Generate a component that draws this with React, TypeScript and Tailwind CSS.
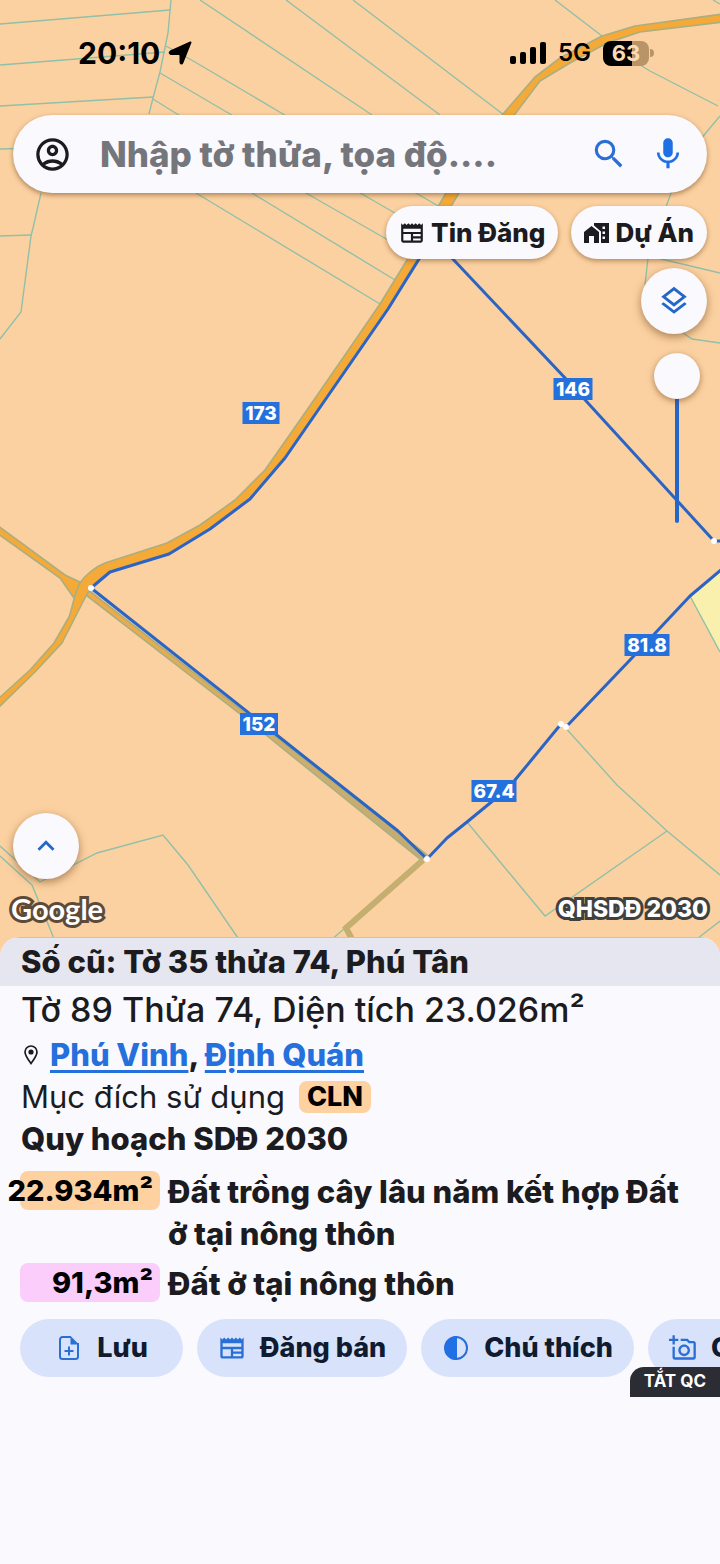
import type { ReactNode } from "react";
import {
  MdKeyboardArrowUp,
  MdMic,
  MdNewspaper,
  MdOutlineAccountCircle,
  MdOutlineAddAPhoto,
  MdOutlineLayers,
  MdSearch,
} from "react-icons/md";

interface EdgeLabel {
  x: number;
  y: number;
  width: number;
  text: string;
}

interface Zone {
  area: string;
  name: string;
  color: string;
}

const parcelLines = [
  "0,24 170,10",
  "171,0 168,33 160,72 153,98 149,114",
  "41,193 33,228 31,236 21,312 0,339",
  "0,65 165,52",
  "0,106 153,97",
  "0,149 40,148",
  "0,236 31,235",
  "200,0 372,115",
  "286,0 440,115",
  "353,0 504,115",
  "166,46 195,62 283,114 416,193 445,210",
  "160,73 230,114 362,194 400,216",
  "153,99 177,114 306,193 395,244",
  "252,193 395,280",
  "196,193 380,304",
  "555,0 602,36",
  "635,62 650,71 718,106",
  "713,0 720,4",
  "720,116 700,140 671,193 648,258 645,285",
  "657,258 720,273",
  "683,333 692,339 720,343",
  "690,596 720,652",
  "563,725 617,785 667,831 720,875",
  "667,831 545,916 467,822",
  "720,921 698,938",
  "0,846 40,882 97,853 163,835 188,865 240,941",
  "0,856 32,885 55,941",
  "330,941 345,928",
];

const edgeLabels: EdgeLabel[] = [
  { x: 261, y: 413, width: 37, text: "173" },
  { x: 573, y: 389, width: 39, text: "146" },
  { x: 647, y: 645, width: 45, text: "81.8" },
  { x: 259, y: 724, width: 38, text: "152" },
  { x: 494, y: 791, width: 45, text: "67.4" },
];

const vertices = [
  [91, 588],
  [427, 859],
  [561, 724],
  [566, 727],
  [714, 541],
];

const zones: Zone[] = [
  {
    area: "22.934m²",
    name: "Đất trồng cây lâu năm kết hợp Đất ở tại nông thôn",
    color: "bg-[#fdd1a0]",
  },
  { area: "91,3m²", name: "Đất ở tại nông thôn", color: "bg-[#fbcdfb]" },
];

const ParcelMap = () => (
  <svg
    className="absolute inset-0 h-full w-full"
    viewBox="0 0 720 960"
    preserveAspectRatio="xMidYMin slice"
    role="img"
    aria-label="Bản đồ thửa đất"
  >
    <defs>
      <linearGradient id="lane" x1="0" y1="0" x2="1" y2="1">
        <stop offset="0" stopColor="#f5aa3c" />
        <stop offset="0.6" stopColor="#cfae6a" />
        <stop offset="1" stopColor="#c0ab74" />
      </linearGradient>
    </defs>
    <rect width="720" height="960" fill="#fcd1a1" />
    <polygon points="690,596 720,571 720,652" fill="#f9f0ae" />
    <g fill="none" stroke="#90c0a8" strokeWidth="1.4">
      {parcelLines.map((points) => (
        <polyline key={points} points={points} />
      ))}
    </g>

    {/* roads */}
    <g stroke="#a9ae83" strokeWidth="1.6" strokeLinejoin="round">
      <path
        d="M87 589L427 855L421 860L240 714L86 595Z"
        fill="url(#lane)"
      />
      <path d="M-3 525L65 575L82 583L74 598L60 578L-3 533Z" fill="#f5a937" />
      <path
        d="M446 193L407 260L380 304L345 355L300 420L265 470L245 490L235 500L200 525L167 543L105 563C95 567 85 575 80 583C74 594 73 606 69 617L54 643L30 670L-3 700L-3 709L35 672L62 643L87 594L91 588L110 572L169 554L210 529L250 499L285 458L388 309L419 260L459 193L515 114L540 81L570 63L607 43L640 32L723 22L723 14L635 26L602 36L560 58L535 77L503 114Z"
        fill="#f5a937"
      />
    </g>
    <path d="M423 860L346 928L353 941" fill="none" stroke="#c5af70" strokeWidth="6" />

    {/* selected parcel */}
    <g fill="none" stroke="#2a64c4" strokeWidth="3" strokeLinejoin="round">
      <path d="M427 859L398 831L91 588L110 572L169 554L210 529L250 499L285 458L388 309L432 238L451 257L566 379L714 541L722 541" />
      <path d="M722 569L690 596L630 660L566 727" />
      <path d="M561 724L515 780L495 799L467 822L447 838L427 859" />
    </g>
    {vertices.map(([x, y]) => (
      <circle key={x} cx={x} cy={y} r="3" fill="#fff" />
    ))}
    {edgeLabels.map(({ x, y, width, text }) => (
      <g key={text}>
        <rect x={x - width / 2} y={y - 11} width={width} height="22" fill="#2470dc" />
        <text
          x={x}
          y={y + 7}
          textAnchor="middle"
          className="fill-white font-['Inter',sans-serif] text-[19px] font-extrabold"
        >
          {text}
        </text>
      </g>
    ))}
  </svg>
);

const StatusBar = () => (
  <div className="flex h-[106px] items-center justify-between pr-[66px] pl-[78px] text-black">
    <div className="flex items-center gap-2">
      <time className="text-[30px] font-bold">20:10</time>
      <svg className="size-6" viewBox="0 0 24 24" aria-hidden="true">
        <path
          d="M22.500 1.500L14.500 21.500Q13.500 23.500 12.500 21.500V14.500Q12.500 13 11 13H3Q0.500 12 2.500 10.500Z"
          fill="currentColor"
          stroke="currentColor"
          strokeWidth="2"
          strokeLinejoin="round"
        />
      </svg>
    </div>
    <div className="flex items-center gap-3">
      <svg className="h-6 w-9" viewBox="0 0 36 24" fill="currentColor" aria-hidden="true">
        <rect x="0" y="15" width="6" height="8" rx="2" />
        <rect x="10" y="11" width="6" height="12" rx="2" />
        <rect x="20" y="6" width="6" height="17" rx="2" />
        <rect x="30" y="1" width="6" height="22" rx="2" />
      </svg>
      <span className="text-2xl font-semibold">5G</span>
      <div className="flex items-center gap-px">
        <div className="flex h-[25px] w-[46px] items-center justify-center rounded-lg bg-linear-to-r from-black from-64% to-[#b89468] to-64% text-[22px] font-bold text-[#fbdcb8]">
          63
        </div>
        <div className="h-2 w-1 rounded-r-full bg-[#b89468]" />
      </div>
    </div>
  </div>
);

const SearchBar = () => (
  <form
    className="mx-[13px] mt-[9px] flex h-[78px] items-center rounded-full bg-[#faf9fe] px-5 shadow-[0_2px_5px_rgba(90,50,10,0.5)]"
    onSubmit={(event) => event.preventDefault()}
  >
    <button type="button" aria-label="Tài khoản" className="text-[#1b1b20]">
      <MdOutlineAccountCircle className="size-[39px]" />
    </button>
    <input
      type="search"
      aria-label="Tìm kiếm"
      placeholder="Nhập tờ thửa, tọa độ...."
      className="ml-7 min-w-0 flex-1 bg-transparent text-[35px] font-extrabold outline-none placeholder:text-[#75767c]"
    />
    <button type="submit" aria-label="Tìm" className="text-[#2a6fd6]">
      <MdSearch className="size-[38px]" />
    </button>
    <button type="button" aria-label="Tìm bằng giọng nói" className="ml-[21px] text-[#1f6fe5]">
      <MdMic className="size-[38px]" />
    </button>
  </form>
);

const MapChip = ({ icon, children }: { icon: ReactNode; children: ReactNode }) => (
  <button className="flex h-[53px] items-center gap-[6px] rounded-full bg-[#faf9fe] px-[13px] text-[26px] font-extrabold text-[#1b1b20] shadow-[0_2px_5px_rgba(90,50,10,0.45)]">
    {icon}
    {children}
  </button>
);

const RoundButton = ({ label, children }: { label: string; children: ReactNode }) => (
  <button
    aria-label={label}
    className="flex size-[66px] items-center justify-center rounded-full bg-[#faf9fe] text-[#2467c8] shadow-[0_3px_8px_rgba(90,50,10,0.5)]"
  >
    {children}
  </button>
);

const ActionButton = ({ icon, children }: { icon: ReactNode; children: ReactNode }) => (
  <button className="flex h-[58px] min-w-[163px] shrink-0 items-center justify-center gap-[14px] rounded-full bg-[#d8e3fb] px-[21px] text-[27px] font-extrabold text-[#101b30]">
    <span className="text-[#2a6fd6]">{icon}</span>
    {children}
  </button>
);

const HomeWorkIcon = () => (
  <svg className="h-5 w-[25px]" viewBox="0 0 25 20" fill="currentColor" aria-hidden="true">
    <path d="M0 9L7.500 3L15 9V20H10V13H5V20H0Z" />
    <path
      fillRule="evenodd"
      d="M10 0H25V20H17V8.500L10 2.500ZM18.500 3.500V6H21V3.500ZM18.500 8.500V11H21V8.500ZM18.500 13.500V16H21V13.500Z"
    />
  </svg>
);

const PinIcon = () => (
  <svg className="h-5 w-[14px]" viewBox="0 0 14 20" aria-hidden="true">
    <path
      d="M7 18.500C4 14.500 1 10.500 1 7a6 6 0 0 1 12 0C13 10.500 10 14.500 7 18.500Z"
      fill="none"
      stroke="currentColor"
      strokeWidth="1.700"
    />
    <circle cx="7" cy="7" r="2.600" fill="currentColor" />
  </svg>
);

const NoteAddIcon = () => (
  <svg className="size-[28px]" viewBox="0 0 28 28" fill="none" stroke="currentColor" aria-hidden="true">
    <path
      d="M16 3H7.500A2.500 2.500 0 0 0 5 5.500v17A2.500 2.500 0 0 0 7.500 25h13a2.500 2.500 0 0 0 2.500-2.500V9"
      strokeWidth="2"
    />
    <path d="M15.500 2L24 10.500H15.500Z" fill="currentColor" stroke="none" />
    <path d="M14 12.500v9M9.500 17h9" strokeWidth="2" />
  </svg>
);

const ContrastIcon = () => (
  <svg className="size-[28px]" viewBox="0 0 28 28" aria-hidden="true">
    <circle cx="14" cy="14" r="11" fill="none" stroke="currentColor" strokeWidth="2" />
    <path d="M15 2A12 12 0 1 0 15 26Z" fill="#1f6fe5" />
  </svg>
);

const MapView = () => (
  <section className="relative flex h-[957px] flex-col overflow-hidden">
    <ParcelMap />
    <div className="relative flex flex-1 flex-col">
      <StatusBar />
      <SearchBar />
      <div className="mt-[13px] flex justify-end gap-[13px] px-[13px]">
        <MapChip icon={<MdNewspaper className="size-[26px]" />}>Tin Đăng</MapChip>
        <MapChip icon={<HomeWorkIcon />}>Dự Án</MapChip>
      </div>
      <div className="mt-[9px] flex flex-col items-end gap-[19px] pr-[13px]">
        <RoundButton label="Lớp bản đồ">
          <MdOutlineLayers className="size-[34px]" />
        </RoundButton>
        <input
          type="range"
          aria-label="Độ mờ lớp quy hoạch"
          defaultValue={0}
          className="mr-[7px] h-[170px] w-[46px] appearance-none bg-transparent [writing-mode:vertical-lr] [&::-webkit-slider-runnable-track]:w-[4px] [&::-webkit-slider-runnable-track]:rounded-full [&::-webkit-slider-runnable-track]:bg-[#2467c8] [&::-webkit-slider-thumb]:-ml-[21px] [&::-webkit-slider-thumb]:size-[46px] [&::-webkit-slider-thumb]:appearance-none [&::-webkit-slider-thumb]:rounded-full [&::-webkit-slider-thumb]:bg-[#faf9fe] [&::-webkit-slider-thumb]:shadow-[0_2px_6px_rgba(90,50,10,0.5)]"
        />
      </div>
      <div className="mt-auto pb-[27px]">
        <div className="px-[13px]">
          <RoundButton label="Mở rộng">
            <MdKeyboardArrowUp className="size-[34px]" />
          </RoundButton>
        </div>
        <div className="mt-[9px] flex h-[42px] items-center justify-between pr-3 pl-[11px]">
          <span className="font-['Lato',sans-serif] text-[29px] font-bold text-white [-webkit-text-stroke:6px_#5f4a38] [paint-order:stroke_fill]">
            Google
          </span>
          <span className="text-[23px] font-extrabold text-white [-webkit-text-stroke:6px_#40403f] [paint-order:stroke_fill]">
            QHSDĐ 2030
          </span>
        </div>
      </div>
    </div>
  </section>
);

const ParcelSheet = () => (
  <section className="relative -mt-5 flex-1 overflow-hidden rounded-t-[20px] bg-[#faf9fe]">
    <h2 className="flex h-[49px] items-center border-t border-[#c9c2c4] bg-[#e6e6f1] px-[21px] text-[31px] font-extrabold">
      Số cũ: Tờ 35 thửa 74, Phú Tân
    </h2>
    <div className="px-[21px]">
      <h1 className="text-[34px] leading-[48px] font-medium">Tờ 89 Thửa 74, Diện tích 23.026m²</h1>
      <p className="flex items-center text-[31px] leading-[42px] font-extrabold">
        <span className="mr-3 ml-[3px]">
          <PinIcon />
        </span>
        <span>
          <a href="#phu-vinh" className="text-[#2470dc] underline decoration-[3px] underline-offset-4">
            Phú Vinh
          </a>
          ,{" "}
          <a href="#dinh-quan" className="text-[#2470dc] underline decoration-[3px] underline-offset-4">
            Định Quán
          </a>
        </span>
      </p>
      <p className="flex items-center gap-[14px] text-[31px] leading-[42px]">
        Mục đích sử dụng
        <span className="rounded-lg bg-[#fdd1a0] px-2 text-[27px] leading-8 font-extrabold text-black">CLN</span>
      </p>
      <h3 className="text-[31px] leading-[42px] font-extrabold">Quy hoạch SDĐ 2030</h3>
    </div>
    <ul className="mt-[11px] flex flex-col gap-2 px-5">
      {zones.map((zone) => (
        <li key={zone.area} className="flex items-start gap-2 text-[31px] leading-[42px] font-extrabold">
          <span
            className={`flex h-[39px] w-[140px] shrink-0 items-center justify-end rounded-lg pr-[7px] text-[29px] whitespace-nowrap text-black ${zone.color}`}
          >
            {zone.area}
          </span>
          <span>{zone.name}</span>
        </li>
      ))}
    </ul>
    <div className="mt-[14px] flex gap-[14px] overflow-hidden pl-5">
      <ActionButton icon={<NoteAddIcon />}>Lưu</ActionButton>
      <ActionButton icon={<MdNewspaper className="size-[28px]" />}>Đăng bán</ActionButton>
      <ActionButton icon={<ContrastIcon />}>Chú thích</ActionButton>
      <ActionButton icon={<MdOutlineAddAPhoto className="size-[28px]" />}>Chụp ảnh</ActionButton>
    </div>
    <div className="relative -mt-[10px] flex justify-end">
      <button className="h-[30px] rounded-tl-[14px] bg-[#2c2c35] px-[14px] text-[17px] font-bold text-white">
        TẮT QC
      </button>
    </div>
  </section>
);

export default function App() {
  return (
    <main className="flex min-h-screen flex-col bg-[#faf9fe] font-['Inter','Noto_Sans',sans-serif] text-[#1b1b20]">
      <MapView />
      <ParcelSheet />
    </main>
  );
}
